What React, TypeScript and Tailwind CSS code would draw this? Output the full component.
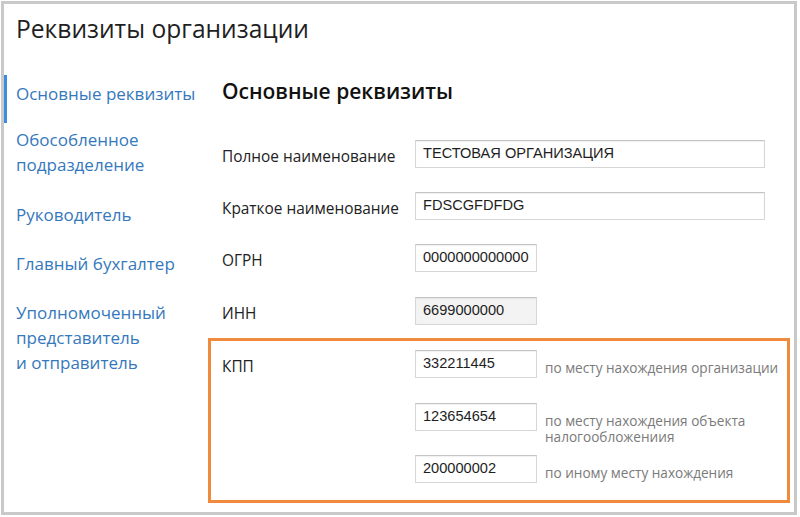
import React from "react";

const ui = { fontFamily: '"Open Sans", "Noto Sans", "DejaVu Sans", sans-serif' };
const arial = { fontFamily: '"Liberation Sans", Arial, sans-serif' };

function Field({ value, wide, gray }: { value: string; wide?: boolean; gray?: boolean }) {
  return (
    <div
      className={`shrink-0 h-[28px] border border-[#d6d6d6] border-t-[#c4c4c4] shadow-[inset_0_1px_1px_rgba(0,0,0,0.06)] flex items-center pl-[7px] text-[14.6px] text-[#1e1e1e] ${
        wide ? "w-[350px]" : "w-[122px]"
      } ${gray ? "bg-[#f3f3f3]" : "bg-white"}`}
      style={arial}
    >
      {value}
    </div>
  );
}

function Row({ label, children, className = "" }: { label: string; children: React.ReactNode; className?: string }) {
  return (
    <div className={`flex items-center h-[28px] ${className}`}>
      <div className="w-[193px] text-[15.4px] text-[#222] leading-none pt-[5px]">{label}</div>
      {children}
    </div>
  );
}

function KppRow({ value, children, className = "" }: { value: string; children: React.ReactNode; className?: string }) {
  return (
    <div className={`flex items-start h-[28px] ${className}`}>
      <Field value={value} />
      <div className="ml-[8px] pt-[10px] text-[13.6px] leading-[16px] text-[#7a7a7a] whitespace-nowrap">{children}</div>
    </div>
  );
}

export default function App() {
  return (
    <div className="w-[800px] h-[517px] bg-white pt-[1px] pl-[1px]" style={ui}>
      <div className="w-[796px] h-[514px] border-[3px] border-[#c9c9c9] flex flex-col">
        <div className="pl-[12px] pt-[9px] h-[71px] text-[24.6px] leading-[32px] text-[#1f1f1f]">
          Реквизиты организации
        </div>
        <div className="flex">
          {/* Sidebar */}
          <div className="w-[204px] flex flex-col text-[17px] text-[#3578bd] leading-[25px]">
            <div className="h-[48px] border-l-[3px] border-[#3a8ee0] pl-[9px] pt-[6px]">Основные реквизиты</div>
            <div className="mt-[4px] pl-[12px]">
              Обособленное
              <br />
              подразделение
            </div>
            <div className="mt-[25px] pl-[12px]">Руководитель</div>
            <div className="mt-[24px] pl-[12px]">Главный бухгалтер</div>
            <div className="mt-[24px] pl-[12px]">
              Уполномоченный
              <br />
              представитель
              <br />и отправитель
            </div>
          </div>
          {/* Main */}
          <div className="w-[582px] flex flex-col">
            <div className="pl-[14px] pt-[1px] h-[65px] text-[21px] font-semibold leading-[30px] text-[#111]">
              Основные реквизиты
            </div>
            <div className="pl-[14px] flex flex-col">
              <Row label="Полное наименование">
                <Field value="ТЕСТОВАЯ ОРГАНИЗАЦИЯ" wide />
              </Row>
              <Row label="Краткое наименование" className="mt-[24px]">
                <Field value="FDSCGFDFDG" wide />
              </Row>
              <Row label="ОГРН" className="mt-[24px]">
                <Field value="0000000000000" />
              </Row>
              <Row label="ИНН" className="mt-[25px]">
                <Field value="6699000000" gray />
              </Row>
            </div>
            <div className="mt-[13px] h-[165px] border-[3px] border-[#f08a3c] pl-[11px] pt-[9px] flex flex-col">
              <div className="flex items-start">
                <div className="w-[193px] h-[28px] flex items-center text-[15.4px] text-[#222] leading-none pt-[5px]">КПП</div>
                <div className="flex flex-col">
                  <KppRow value="332211445">по месту нахождения организации</KppRow>
                  <KppRow value="123654654" className="mt-[25px]">
                    по месту нахождения объекта
                    <br />
                    налогообложениия
                  </KppRow>
                  <KppRow value="200000002" className="mt-[24px]">
                    по иному месту нахождения
                  </KppRow>
                </div>
              </div>
            </div>
          </div>
        </div>
      </div>
    </div>
  );
}
